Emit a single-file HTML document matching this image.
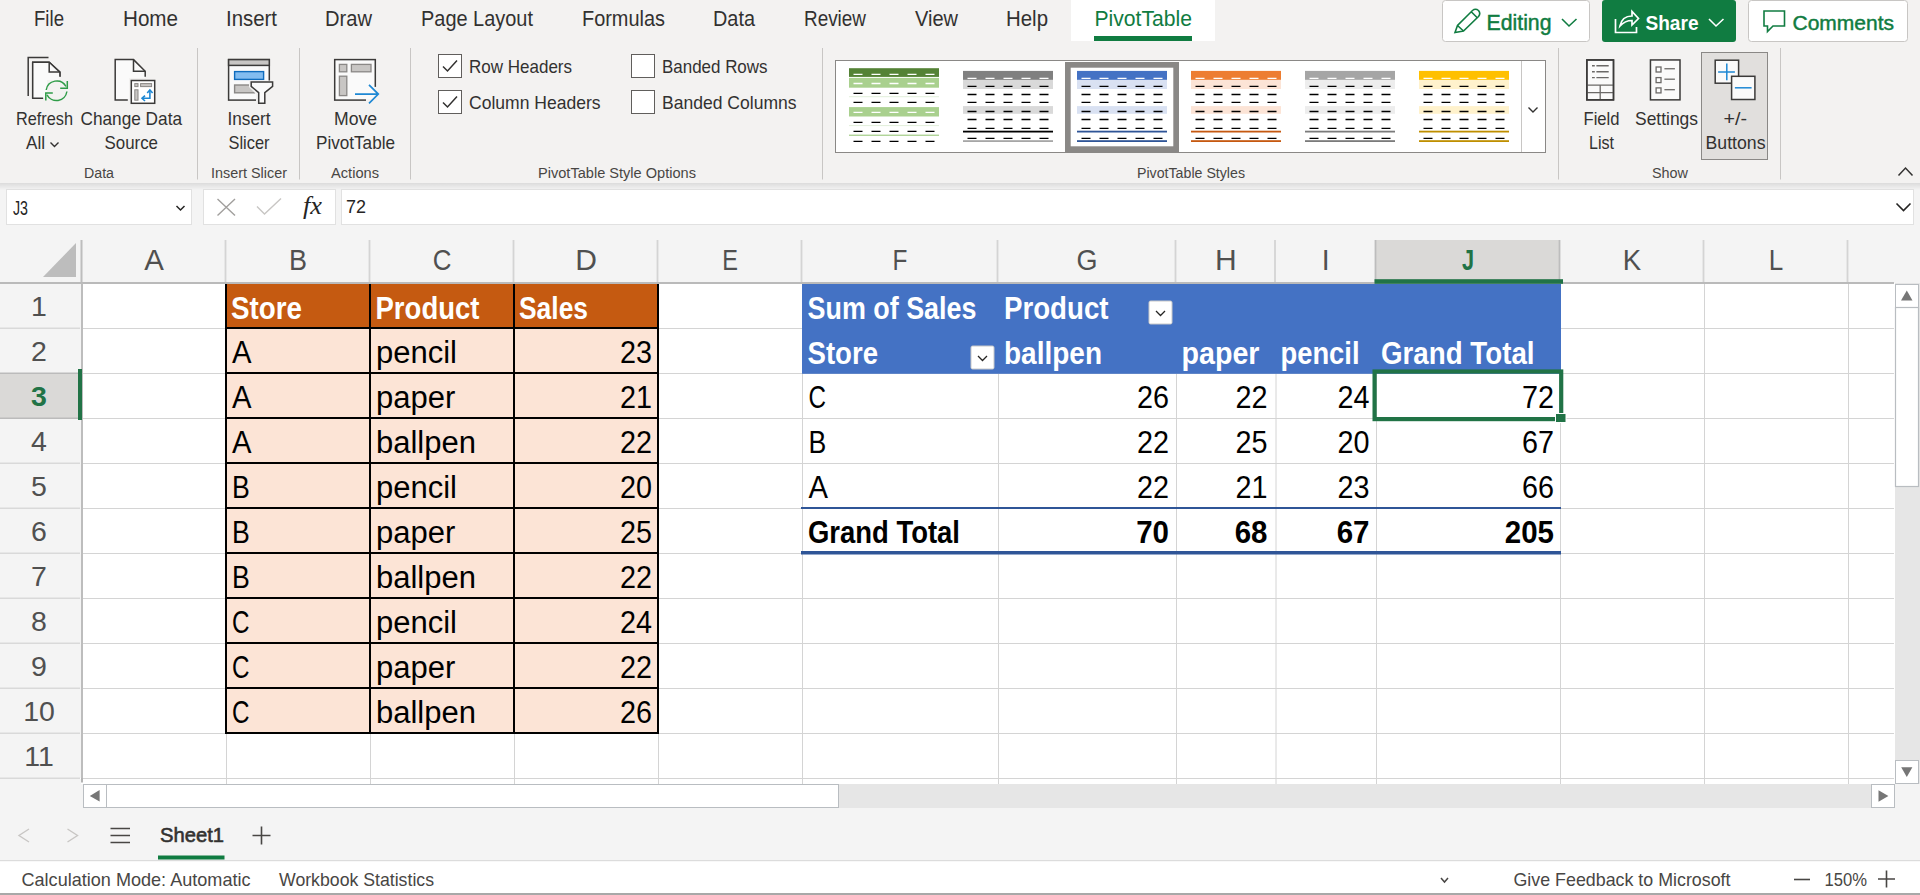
<!DOCTYPE html>
<html lang="en"><head><meta charset="utf-8"><title>Excel - PivotTable</title>
<style>
html,body{margin:0;padding:0;background:#ffffff;overflow:hidden;}
body{width:1920px;height:895px;font-family:"Liberation Sans", sans-serif;}
svg{display:block;font-family:"Liberation Sans", sans-serif;}
</style></head>
<body>
<svg width="1920" height="895" viewBox="0 0 1920 895">
<rect x="0" y="0" width="1920" height="183" fill="#f3f2f1" />
<rect x="0" y="183" width="1920" height="101" fill="#f4f4f4" />
<defs><linearGradient id="shd" x1="0" y1="0" x2="0" y2="1"><stop offset="0" stop-color="#000" stop-opacity="0.10"/><stop offset="1" stop-color="#000" stop-opacity="0"/></linearGradient></defs>
<rect x="0" y="183" width="1920" height="7" fill="url(#shd)" />
<rect x="1071" y="0" width="144" height="41" fill="#ffffff" />
<rect x="1094" y="36" width="98" height="5" fill="#107c41" />
<text x="34" y="26" font-size="22" fill="#323130" textLength="30" lengthAdjust="spacingAndGlyphs" >File</text>
<text x="123" y="26" font-size="22" fill="#323130" textLength="55" lengthAdjust="spacingAndGlyphs" >Home</text>
<text x="226" y="26" font-size="22" fill="#323130" textLength="51" lengthAdjust="spacingAndGlyphs" >Insert</text>
<text x="325" y="26" font-size="22" fill="#323130" textLength="47" lengthAdjust="spacingAndGlyphs" >Draw</text>
<text x="421" y="26" font-size="22" fill="#323130" textLength="112" lengthAdjust="spacingAndGlyphs" >Page Layout</text>
<text x="582" y="26" font-size="22" fill="#323130" textLength="83" lengthAdjust="spacingAndGlyphs" >Formulas</text>
<text x="713" y="26" font-size="22" fill="#323130" textLength="42" lengthAdjust="spacingAndGlyphs" >Data</text>
<text x="804" y="26" font-size="22" fill="#323130" textLength="62" lengthAdjust="spacingAndGlyphs" >Review</text>
<text x="915" y="26" font-size="22" fill="#323130" textLength="43" lengthAdjust="spacingAndGlyphs" >View</text>
<text x="1006" y="26" font-size="22" fill="#323130" textLength="42" lengthAdjust="spacingAndGlyphs" >Help</text>
<text x="1094.5" y="26" font-size="22" fill="#107c41" textLength="97.5" lengthAdjust="spacingAndGlyphs" >PivotTable</text>
<rect x="1442.5" y="0.5" width="147" height="41" fill="#ffffff" rx="3" stroke="#c8c6c4" stroke-width="1"/>
<text x="1486.5" y="29.8" font-size="21.5" fill="#107c41" textLength="65" lengthAdjust="spacingAndGlyphs" stroke="#107c41" stroke-width="0.45">Editing</text>
<path d="M1455 32.5 L1457.5 25.5 L1472.5 10.5 Q1475.5 8 1478.5 10.5 Q1481 13.5 1478.5 16.5 L1463.5 31 Z M1457.5 25.5 L1463.5 31 M1471.5 12 L1477 17.5" stroke="#107c41" fill="none" stroke-width="1.6" />
<path d="M1562 19 L1569 26 L1576.5 19" stroke="#107c41" fill="none" stroke-width="1.6" />
<rect x="1602" y="0" width="134" height="42" fill="#107c41" rx="3"/>
<text x="1645.5" y="30" font-size="21" fill="#ffffff" font-weight="bold" textLength="53" lengthAdjust="spacingAndGlyphs" >Share</text>
<path d="M1615.5 19 V32.5 H1636.5 V27" stroke="#ffffff" fill="none" stroke-width="1.7" />
<path d="M1620 26 Q1622 16 1632 16 V11.5 L1638.5 18.5 L1632 25 V20.5 Q1625 20.5 1620 26 Z" stroke="#ffffff" fill="none" stroke-width="1.7" />
<path d="M1709 19 L1716 26 L1723.5 19" stroke="#ffffff" fill="none" stroke-width="1.6" />
<rect x="1748.5" y="0.5" width="159" height="41" fill="#ffffff" rx="3" stroke="#c8c6c4" stroke-width="1"/>
<path d="M1764 11 H1784.5 V26 H1773 L1767.5 31.5 V26 H1764 Z" stroke="#107c41" fill="none" stroke-width="1.6" />
<text x="1792.5" y="29.8" font-size="21" fill="#107c41" textLength="101.5" lengthAdjust="spacingAndGlyphs" stroke="#107c41" stroke-width="0.45">Comments</text>
<line x1="197.5" y1="48" x2="197.5" y2="179.5" stroke="#c8c6c4" stroke-width="1" />
<line x1="299.5" y1="48" x2="299.5" y2="179.5" stroke="#c8c6c4" stroke-width="1" />
<line x1="410.5" y1="48" x2="410.5" y2="179.5" stroke="#c8c6c4" stroke-width="1" />
<line x1="822.5" y1="48" x2="822.5" y2="179.5" stroke="#c8c6c4" stroke-width="1" />
<line x1="1558.5" y1="48" x2="1558.5" y2="179.5" stroke="#c8c6c4" stroke-width="1" />
<line x1="1780.5" y1="48" x2="1780.5" y2="179.5" stroke="#c8c6c4" stroke-width="1" />
<text x="84" y="178" font-size="15.5" fill="#484644" textLength="30" lengthAdjust="spacingAndGlyphs" >Data</text>
<text x="211" y="178" font-size="15.5" fill="#484644" textLength="76" lengthAdjust="spacingAndGlyphs" >Insert Slicer</text>
<text x="331" y="178" font-size="15.5" fill="#484644" textLength="48" lengthAdjust="spacingAndGlyphs" >Actions</text>
<text x="538" y="178" font-size="15.5" fill="#484644" textLength="158" lengthAdjust="spacingAndGlyphs" >PivotTable Style Options</text>
<text x="1137" y="178" font-size="15.5" fill="#484644" textLength="108" lengthAdjust="spacingAndGlyphs" >PivotTable Styles</text>
<text x="1652" y="178" font-size="15.5" fill="#484644" textLength="36" lengthAdjust="spacingAndGlyphs" >Show</text>
<text x="16" y="124.8" font-size="18.5" fill="#323130" textLength="57" lengthAdjust="spacingAndGlyphs" >Refresh</text>
<text x="26" y="148.7" font-size="18.5" fill="#323130" textLength="19" lengthAdjust="spacingAndGlyphs" >All</text>
<path d="M50.5 142.5 L54.5 146.5 L58.5 142.5" stroke="#323130" fill="none" stroke-width="1.4" />
<text x="80.5" y="124.8" font-size="18.5" fill="#323130" textLength="101.5" lengthAdjust="spacingAndGlyphs" >Change Data</text>
<text x="104.5" y="148.7" font-size="18.5" fill="#323130" textLength="53.5" lengthAdjust="spacingAndGlyphs" >Source</text>
<text x="227.5" y="124.8" font-size="18.5" fill="#323130" textLength="43" lengthAdjust="spacingAndGlyphs" >Insert</text>
<text x="228.5" y="148.7" font-size="18.5" fill="#323130" textLength="41" lengthAdjust="spacingAndGlyphs" >Slicer</text>
<text x="334" y="124.8" font-size="18.5" fill="#323130" textLength="43" lengthAdjust="spacingAndGlyphs" >Move</text>
<text x="316" y="148.7" font-size="18.5" fill="#323130" textLength="79" lengthAdjust="spacingAndGlyphs" >PivotTable</text>
<text x="1583.5" y="124.5" font-size="18.5" fill="#323130" textLength="36" lengthAdjust="spacingAndGlyphs" >Field</text>
<text x="1589" y="148.5" font-size="18.5" fill="#323130" textLength="25" lengthAdjust="spacingAndGlyphs" >List</text>
<text x="1635" y="124.5" font-size="18.5" fill="#323130" textLength="63" lengthAdjust="spacingAndGlyphs" >Settings</text>
<rect x="1701.5" y="52.5" width="66" height="107" fill="#e1dfdd" stroke="#8a8886" stroke-width="1"/>
<text x="1723.5" y="124.5" font-size="18.5" fill="#323130" textLength="23.5" lengthAdjust="spacingAndGlyphs" >+/-</text>
<text x="1705.5" y="148.5" font-size="18.5" fill="#323130" textLength="60" lengthAdjust="spacingAndGlyphs" >Buttons</text>
<rect x="438.5" y="54.5" width="23" height="23" fill="#ffffff" stroke="#605e5c" stroke-width="1"/>
<path d="M443 66.5 L447.5 71 L457 60.5" stroke="#323130" fill="none" stroke-width="1.5" />
<text x="469" y="73" font-size="18.5" fill="#323130" textLength="103" lengthAdjust="spacingAndGlyphs" >Row Headers</text>
<rect x="438.5" y="90.5" width="23" height="23" fill="#ffffff" stroke="#605e5c" stroke-width="1"/>
<path d="M443 102.5 L447.5 107 L457 96.5" stroke="#323130" fill="none" stroke-width="1.5" />
<text x="469" y="109" font-size="18.5" fill="#323130" textLength="131.5" lengthAdjust="spacingAndGlyphs" >Column Headers</text>
<rect x="631.5" y="54.5" width="23" height="23" fill="#ffffff" stroke="#605e5c" stroke-width="1"/>
<text x="662" y="73" font-size="18.5" fill="#323130" textLength="105.5" lengthAdjust="spacingAndGlyphs" >Banded Rows</text>
<rect x="631.5" y="90.5" width="23" height="23" fill="#ffffff" stroke="#605e5c" stroke-width="1"/>
<text x="662" y="109" font-size="18.5" fill="#323130" textLength="134.5" lengthAdjust="spacingAndGlyphs" >Banded Columns</text>
<path d="M1898.5 175.5 L1905.5 168 L1912.5 175.5" stroke="#323130" fill="none" stroke-width="1.5" />
<path d="M28.2 96 V57.4 H48.5" stroke="#3b3a39" fill="none" stroke-width="1.5" />
<path d="M43.1 98.3 H32.7 V62.3 H49.2 L59.9 72.1 V76.8" stroke="#3b3a39" fill="#fafafa" stroke-width="1.5" />
<path d="M32.7 98.3 V62.3 H49.2 L59.9 72.1 V80 L45 96 V98.3 Z" stroke="none" fill="#fafafa" stroke-width="1" />
<path d="M32.7 98.3 H43.1 M32.7 98.3 V62.3 H49.2 L59.9 72.1 V76.8" stroke="#3b3a39" fill="none" stroke-width="1.5" />
<path d="M49.2 62.3 V72.1 H59.9" stroke="#3b3a39" fill="none" stroke-width="1.5" />
<rect x="47" y="80" width="22" height="22" fill="#f3f2f1" />
<path d="M46.2 90 A10.6 10.6 0 0 1 66 86.5" stroke="#2f9c48" fill="none" stroke-width="1.5" />
<path d="M67.3 81 V88.2 H60.2" stroke="#2f9c48" fill="none" stroke-width="1.5" />
<path d="M66.9 91.5 A10.6 10.6 0 0 1 47 94.8" stroke="#2f9c48" fill="none" stroke-width="1.5" />
<path d="M45.8 100.6 V92.9 H52.8" stroke="#2f9c48" fill="none" stroke-width="1.5" />
<path d="M115.2 100.1 V59.6 H133.5 L145.2 71.3 V80 L127.8 100.1 Z" stroke="none" fill="#fafafa" stroke-width="1" />
<path d="M127.8 100.1 H115.2 V59.6 H133.5 L145.2 71.3 V76.7" stroke="#3b3a39" fill="none" stroke-width="1.5" />
<path d="M133.5 59.6 V71.3 H145.2" stroke="#3b3a39" fill="none" stroke-width="1.5" />
<rect x="129" y="78" width="28" height="28" fill="#f3f2f1" />
<rect x="131.3" y="80.5" width="23.4" height="22.8" fill="#ffffff" stroke="#3b3a39" stroke-width="1.5"/>
<rect x="134.8" y="83.6" width="3.2" height="3" fill="#c8c6c4" stroke="#8a8886" stroke-width="1"/>
<rect x="140.6" y="83.6" width="11" height="3" fill="#c8c6c4" stroke="#8a8886" stroke-width="1"/>
<rect x="134.8" y="89.8" width="3.2" height="10.4" fill="#c8c6c4" stroke="#8a8886" stroke-width="1"/>
<path d="M142.5 98.3 H149.9 V90.5" stroke="#1e88d4" fill="none" stroke-width="1.6" />
<path d="M145 95.6 L142 98.3 L145 101 M147.2 93 L149.9 90 L152.6 93" stroke="#1e88d4" fill="none" stroke-width="1.6" />
<rect x="228.6" y="59.6" width="40.7" height="40.5" fill="#fafafa" stroke="#3b3a39" stroke-width="1.5"/>
<rect x="228.6" y="59.6" width="40.7" height="5.8" fill="#c8c6c4" stroke="#3b3a39" stroke-width="1.5"/>
<rect x="234.6" y="71.6" width="29" height="7.8" fill="#83bdf0" stroke="#0f6cbd" stroke-width="1.4"/>
<rect x="234.6" y="85" width="20" height="7.8" fill="#c8c6c4" stroke="#8a8886" stroke-width="1.4"/>
<path d="M249 80.5 H276 V106 H256 V94 L249 87 Z" stroke="none" fill="#f3f2f1" stroke-width="1" />
<path d="M251.2 82 H272.6 V86.4 L264.8 92.6 V103.3 H258.7 V92.6 L251.2 86.4 Z" stroke="#3b3a39" fill="#fafafa" stroke-width="1.5" />
<rect x="334.7" y="59.6" width="40.6" height="40.5" fill="#fafafa" stroke="#3b3a39" stroke-width="1.5"/>
<rect x="339.4" y="64.4" width="7.4" height="7.4" fill="#c8c6c4" stroke="#8a8886" stroke-width="1.3"/>
<rect x="351.4" y="64.4" width="19.6" height="7.4" fill="#c8c6c4" stroke="#8a8886" stroke-width="1.3"/>
<rect x="339.4" y="76.2" width="7.4" height="19.4" fill="#c8c6c4" stroke="#8a8886" stroke-width="1.3"/>
<rect x="366" y="86.9" width="14" height="16" fill="#f3f2f1" />
<rect x="366" y="86.9" width="8.5" height="12.4" fill="#fafafa" />
<path d="M355 94.1 H377.5 M369 84.8 L378.3 94.1 L369 103.4" stroke="#1e88d4" fill="none" stroke-width="1.7" />
<rect x="1586.85" y="59.95" width="26.65" height="39.9" fill="#fafafa" stroke="#3b3a39" stroke-width="1.5"/>
<path d="M1592 65.75 H1594.8 M1596.4 65.75 H1608.7" stroke="#6b6967" fill="none" stroke-width="1.3" />
<path d="M1592 71.75 H1594.8 M1596.4 71.75 H1608.7" stroke="#6b6967" fill="none" stroke-width="1.3" />
<path d="M1592 77.6 H1594.8 M1596.4 77.6 H1608.7" stroke="#6b6967" fill="none" stroke-width="1.3" />
<path d="M1587 85.1 H1613.5 M1587 92.6 H1613.5 M1600.2 85.1 V100" stroke="#6b6967" fill="none" stroke-width="1.3" />
<rect x="1586.85" y="59.95" width="26.65" height="39.9" fill="none" stroke="#3b3a39" stroke-width="1.5"/>
<rect x="1650.45" y="59.95" width="29.55" height="39.9" fill="#fafafa" stroke="#3b3a39" stroke-width="1.5"/>
<rect x="1656.1" y="67.0" width="4.9" height="5" fill="#ffffff" stroke="#6b6967" stroke-width="1.3"/>
<path d="M1664.4 68.75 H1674.9" stroke="#6b6967" fill="none" stroke-width="1.3" />
<rect x="1656.1" y="77.6" width="4.9" height="5" fill="#ffffff" stroke="#6b6967" stroke-width="1.3"/>
<path d="M1664.4 79.2 H1674.9" stroke="#6b6967" fill="none" stroke-width="1.3" />
<rect x="1656.1" y="87.89999999999999" width="4.9" height="5" fill="#ffffff" stroke="#6b6967" stroke-width="1.3"/>
<path d="M1664.4 89.7 H1674.9" stroke="#6b6967" fill="none" stroke-width="1.3" />
<rect x="1715.2" y="60.2" width="23.4" height="23" fill="#fafafa" stroke="#3b3a39" stroke-width="1.5"/>
<path d="M1718.1 71.9 H1734.9 M1726.8 63.4 V80.2" stroke="#1e88d4" fill="none" stroke-width="1.5" />
<rect x="1731.6" y="76.3" width="23.3" height="23.2" fill="#fafafa" stroke="#3b3a39" stroke-width="1.5"/>
<path d="M1734.9 87.8 H1751.6" stroke="#1e88d4" fill="none" stroke-width="1.5" />
<rect x="835.5" y="60.5" width="710" height="92" fill="#ffffff" stroke="#8a8886" stroke-width="1"/>
<line x1="1521.5" y1="61" x2="1521.5" y2="152" stroke="#c8c6c4" stroke-width="1" />
<path d="M1528.5 107.5 L1533 112 L1537.5 107.5" stroke="#323130" fill="none" stroke-width="1.4" />
<rect x="1067.85" y="64.85" width="108.3" height="84.3" fill="none" stroke="#8a8886" stroke-width="5.7"/>
<rect x="849" y="68.2" width="90" height="8.7" fill="#548235" />
<rect x="849" y="77.9" width="90" height="9.8" fill="#a9d08e" />
<rect x="849" y="96.2" width="90" height="1" fill="#e2efda" />
<rect x="849" y="107.1" width="90" height="9.4" fill="#a9d08e" />
<rect x="849" y="125.1" width="90" height="1" fill="#e2efda" />
<rect x="849" y="134.6" width="90" height="1.3" fill="#a9d08e" />
<path d="M853.5 74.4 H862.5 M871.5 74.4 H880.5 M889.5 74.4 H898.5 M907.5 74.4 H916.5 M925.5 74.4 H934.5 " stroke="#fff" fill="none" stroke-width="1.3" />
<path d="M853.5 83.5 H862.5 M871.5 83.5 H880.5 M889.5 83.5 H898.5 M907.5 83.5 H916.5 M925.5 83.5 H934.5 " stroke="#fff" fill="none" stroke-width="1.3" />
<path d="M853.5 93.4 H862.5 M871.5 93.4 H880.5 M889.5 93.4 H898.5 M907.5 93.4 H916.5 M925.5 93.4 H934.5 " stroke="#000" fill="none" stroke-width="1.3" />
<path d="M853.5 102.4 H862.5 M871.5 102.4 H880.5 M889.5 102.4 H898.5 M907.5 102.4 H916.5 M925.5 102.4 H934.5 " stroke="#000" fill="none" stroke-width="1.3" />
<path d="M853.5 112.3 H862.5 M871.5 112.3 H880.5 M889.5 112.3 H898.5 M907.5 112.3 H916.5 M925.5 112.3 H934.5 " stroke="#fff" fill="none" stroke-width="1.3" />
<path d="M853.5 122.3 H862.5 M871.5 122.3 H880.5 M889.5 122.3 H898.5 M907.5 122.3 H916.5 M925.5 122.3 H934.5 " stroke="#000" fill="none" stroke-width="1.3" />
<path d="M853.5 131.4 H862.5 M871.5 131.4 H880.5 M889.5 131.4 H898.5 M907.5 131.4 H916.5 M925.5 131.4 H934.5 " stroke="#000" fill="none" stroke-width="1.3" />
<path d="M853.5 141.4 H862.5 M871.5 141.4 H880.5 M889.5 141.4 H898.5 M907.5 141.4 H916.5 M925.5 141.4 H934.5 " stroke="#000" fill="none" stroke-width="1.3" />
<rect x="963" y="70.9" width="90" height="9" fill="#808080" />
<rect x="963" y="79.9" width="90" height="9.1" fill="#d9d9d9" />
<rect x="963" y="106.1" width="90" height="7.7" fill="#d9d9d9" />
<rect x="963" y="130.7" width="90" height="1.8" fill="#000000" />
<rect x="963" y="140.2" width="90" height="1.8" fill="#a6a6a6" />
<path d="M967.5 78.4 H976.5 M985.5 78.4 H994.5 M1003.5 78.4 H1012.5 M1021.5 78.4 H1030.5 M1039.5 78.4 H1048.5 " stroke="#fff" fill="none" stroke-width="1.3" />
<path d="M967.5 86.4 H976.5 M985.5 86.4 H994.5 M1003.5 86.4 H1012.5 M1021.5 86.4 H1030.5 M1039.5 86.4 H1048.5 " stroke="#000" fill="none" stroke-width="1.3" />
<path d="M967.5 94.5 H976.5 M985.5 94.5 H994.5 M1003.5 94.5 H1012.5 M1021.5 94.5 H1030.5 M1039.5 94.5 H1048.5 " stroke="#000" fill="none" stroke-width="1.3" />
<path d="M967.5 102.4 H976.5 M985.5 102.4 H994.5 M1003.5 102.4 H1012.5 M1021.5 102.4 H1030.5 M1039.5 102.4 H1048.5 " stroke="#000" fill="none" stroke-width="1.3" />
<path d="M967.5 111.5 H976.5 M985.5 111.5 H994.5 M1003.5 111.5 H1012.5 M1021.5 111.5 H1030.5 M1039.5 111.5 H1048.5 " stroke="#000" fill="none" stroke-width="1.3" />
<path d="M967.5 119.5 H976.5 M985.5 119.5 H994.5 M1003.5 119.5 H1012.5 M1021.5 119.5 H1030.5 M1039.5 119.5 H1048.5 " stroke="#000" fill="none" stroke-width="1.3" />
<path d="M967.5 128.4 H976.5 M985.5 128.4 H994.5 M1003.5 128.4 H1012.5 M1021.5 128.4 H1030.5 M1039.5 128.4 H1048.5 " stroke="#000" fill="none" stroke-width="1.3" />
<path d="M967.5 138.4 H976.5 M985.5 138.4 H994.5 M1003.5 138.4 H1012.5 M1021.5 138.4 H1030.5 M1039.5 138.4 H1048.5 " stroke="#000" fill="none" stroke-width="1.3" />
<rect x="1077" y="70.9" width="90" height="9" fill="#4472c4" />
<rect x="1077" y="79.9" width="90" height="9.1" fill="#d9e1f2" />
<rect x="1077" y="106.1" width="90" height="7.7" fill="#d9e1f2" />
<rect x="1077" y="130.7" width="90" height="1.8" fill="#2f5597" />
<rect x="1077" y="140.2" width="90" height="1.8" fill="#2f5597" />
<path d="M1081.5 78.4 H1090.5 M1099.5 78.4 H1108.5 M1117.5 78.4 H1126.5 M1135.5 78.4 H1144.5 M1153.5 78.4 H1162.5 " stroke="#fff" fill="none" stroke-width="1.3" />
<path d="M1081.5 86.4 H1090.5 M1099.5 86.4 H1108.5 M1117.5 86.4 H1126.5 M1135.5 86.4 H1144.5 M1153.5 86.4 H1162.5 " stroke="#000" fill="none" stroke-width="1.3" />
<path d="M1081.5 94.5 H1090.5 M1099.5 94.5 H1108.5 M1117.5 94.5 H1126.5 M1135.5 94.5 H1144.5 M1153.5 94.5 H1162.5 " stroke="#000" fill="none" stroke-width="1.3" />
<path d="M1081.5 102.4 H1090.5 M1099.5 102.4 H1108.5 M1117.5 102.4 H1126.5 M1135.5 102.4 H1144.5 M1153.5 102.4 H1162.5 " stroke="#000" fill="none" stroke-width="1.3" />
<path d="M1081.5 111.5 H1090.5 M1099.5 111.5 H1108.5 M1117.5 111.5 H1126.5 M1135.5 111.5 H1144.5 M1153.5 111.5 H1162.5 " stroke="#000" fill="none" stroke-width="1.3" />
<path d="M1081.5 119.5 H1090.5 M1099.5 119.5 H1108.5 M1117.5 119.5 H1126.5 M1135.5 119.5 H1144.5 M1153.5 119.5 H1162.5 " stroke="#000" fill="none" stroke-width="1.3" />
<path d="M1081.5 128.4 H1090.5 M1099.5 128.4 H1108.5 M1117.5 128.4 H1126.5 M1135.5 128.4 H1144.5 M1153.5 128.4 H1162.5 " stroke="#000" fill="none" stroke-width="1.3" />
<path d="M1081.5 138.4 H1090.5 M1099.5 138.4 H1108.5 M1117.5 138.4 H1126.5 M1135.5 138.4 H1144.5 M1153.5 138.4 H1162.5 " stroke="#000" fill="none" stroke-width="1.3" />
<rect x="1191" y="70.9" width="90" height="9" fill="#ed7d31" />
<rect x="1191" y="79.9" width="90" height="9.1" fill="#fce4d6" />
<rect x="1191" y="106.1" width="90" height="7.7" fill="#fce4d6" />
<rect x="1191" y="130.7" width="90" height="1.8" fill="#c65911" />
<rect x="1191" y="140.2" width="90" height="1.8" fill="#c65911" />
<path d="M1195.5 78.4 H1204.5 M1213.5 78.4 H1222.5 M1231.5 78.4 H1240.5 M1249.5 78.4 H1258.5 M1267.5 78.4 H1276.5 " stroke="#fff" fill="none" stroke-width="1.3" />
<path d="M1195.5 86.4 H1204.5 M1213.5 86.4 H1222.5 M1231.5 86.4 H1240.5 M1249.5 86.4 H1258.5 M1267.5 86.4 H1276.5 " stroke="#000" fill="none" stroke-width="1.3" />
<path d="M1195.5 94.5 H1204.5 M1213.5 94.5 H1222.5 M1231.5 94.5 H1240.5 M1249.5 94.5 H1258.5 M1267.5 94.5 H1276.5 " stroke="#000" fill="none" stroke-width="1.3" />
<path d="M1195.5 102.4 H1204.5 M1213.5 102.4 H1222.5 M1231.5 102.4 H1240.5 M1249.5 102.4 H1258.5 M1267.5 102.4 H1276.5 " stroke="#000" fill="none" stroke-width="1.3" />
<path d="M1195.5 111.5 H1204.5 M1213.5 111.5 H1222.5 M1231.5 111.5 H1240.5 M1249.5 111.5 H1258.5 M1267.5 111.5 H1276.5 " stroke="#000" fill="none" stroke-width="1.3" />
<path d="M1195.5 119.5 H1204.5 M1213.5 119.5 H1222.5 M1231.5 119.5 H1240.5 M1249.5 119.5 H1258.5 M1267.5 119.5 H1276.5 " stroke="#000" fill="none" stroke-width="1.3" />
<path d="M1195.5 128.4 H1204.5 M1213.5 128.4 H1222.5 M1231.5 128.4 H1240.5 M1249.5 128.4 H1258.5 M1267.5 128.4 H1276.5 " stroke="#000" fill="none" stroke-width="1.3" />
<path d="M1195.5 138.4 H1204.5 M1213.5 138.4 H1222.5 M1231.5 138.4 H1240.5 M1249.5 138.4 H1258.5 M1267.5 138.4 H1276.5 " stroke="#000" fill="none" stroke-width="1.3" />
<rect x="1305" y="70.9" width="90" height="9" fill="#a5a5a5" />
<rect x="1305" y="79.9" width="90" height="9.1" fill="#ededed" />
<rect x="1305" y="106.1" width="90" height="7.7" fill="#ededed" />
<rect x="1305" y="130.7" width="90" height="1.8" fill="#7b7b7b" />
<rect x="1305" y="140.2" width="90" height="1.8" fill="#7b7b7b" />
<path d="M1309.5 78.4 H1318.5 M1327.5 78.4 H1336.5 M1345.5 78.4 H1354.5 M1363.5 78.4 H1372.5 M1381.5 78.4 H1390.5 " stroke="#fff" fill="none" stroke-width="1.3" />
<path d="M1309.5 86.4 H1318.5 M1327.5 86.4 H1336.5 M1345.5 86.4 H1354.5 M1363.5 86.4 H1372.5 M1381.5 86.4 H1390.5 " stroke="#000" fill="none" stroke-width="1.3" />
<path d="M1309.5 94.5 H1318.5 M1327.5 94.5 H1336.5 M1345.5 94.5 H1354.5 M1363.5 94.5 H1372.5 M1381.5 94.5 H1390.5 " stroke="#000" fill="none" stroke-width="1.3" />
<path d="M1309.5 102.4 H1318.5 M1327.5 102.4 H1336.5 M1345.5 102.4 H1354.5 M1363.5 102.4 H1372.5 M1381.5 102.4 H1390.5 " stroke="#000" fill="none" stroke-width="1.3" />
<path d="M1309.5 111.5 H1318.5 M1327.5 111.5 H1336.5 M1345.5 111.5 H1354.5 M1363.5 111.5 H1372.5 M1381.5 111.5 H1390.5 " stroke="#000" fill="none" stroke-width="1.3" />
<path d="M1309.5 119.5 H1318.5 M1327.5 119.5 H1336.5 M1345.5 119.5 H1354.5 M1363.5 119.5 H1372.5 M1381.5 119.5 H1390.5 " stroke="#000" fill="none" stroke-width="1.3" />
<path d="M1309.5 128.4 H1318.5 M1327.5 128.4 H1336.5 M1345.5 128.4 H1354.5 M1363.5 128.4 H1372.5 M1381.5 128.4 H1390.5 " stroke="#000" fill="none" stroke-width="1.3" />
<path d="M1309.5 138.4 H1318.5 M1327.5 138.4 H1336.5 M1345.5 138.4 H1354.5 M1363.5 138.4 H1372.5 M1381.5 138.4 H1390.5 " stroke="#000" fill="none" stroke-width="1.3" />
<rect x="1419" y="70.9" width="90" height="9" fill="#ffc000" />
<rect x="1419" y="79.9" width="90" height="9.1" fill="#fff2cc" />
<rect x="1419" y="106.1" width="90" height="7.7" fill="#fff2cc" />
<rect x="1419" y="130.7" width="90" height="1.8" fill="#bf8f00" />
<rect x="1419" y="140.2" width="90" height="1.8" fill="#bf8f00" />
<path d="M1423.5 78.4 H1432.5 M1441.5 78.4 H1450.5 M1459.5 78.4 H1468.5 M1477.5 78.4 H1486.5 M1495.5 78.4 H1504.5 " stroke="#fff" fill="none" stroke-width="1.3" />
<path d="M1423.5 86.4 H1432.5 M1441.5 86.4 H1450.5 M1459.5 86.4 H1468.5 M1477.5 86.4 H1486.5 M1495.5 86.4 H1504.5 " stroke="#000" fill="none" stroke-width="1.3" />
<path d="M1423.5 94.5 H1432.5 M1441.5 94.5 H1450.5 M1459.5 94.5 H1468.5 M1477.5 94.5 H1486.5 M1495.5 94.5 H1504.5 " stroke="#000" fill="none" stroke-width="1.3" />
<path d="M1423.5 102.4 H1432.5 M1441.5 102.4 H1450.5 M1459.5 102.4 H1468.5 M1477.5 102.4 H1486.5 M1495.5 102.4 H1504.5 " stroke="#000" fill="none" stroke-width="1.3" />
<path d="M1423.5 111.5 H1432.5 M1441.5 111.5 H1450.5 M1459.5 111.5 H1468.5 M1477.5 111.5 H1486.5 M1495.5 111.5 H1504.5 " stroke="#000" fill="none" stroke-width="1.3" />
<path d="M1423.5 119.5 H1432.5 M1441.5 119.5 H1450.5 M1459.5 119.5 H1468.5 M1477.5 119.5 H1486.5 M1495.5 119.5 H1504.5 " stroke="#000" fill="none" stroke-width="1.3" />
<path d="M1423.5 128.4 H1432.5 M1441.5 128.4 H1450.5 M1459.5 128.4 H1468.5 M1477.5 128.4 H1486.5 M1495.5 128.4 H1504.5 " stroke="#000" fill="none" stroke-width="1.3" />
<path d="M1423.5 138.4 H1432.5 M1441.5 138.4 H1450.5 M1459.5 138.4 H1468.5 M1477.5 138.4 H1486.5 M1495.5 138.4 H1504.5 " stroke="#000" fill="none" stroke-width="1.3" />
<rect x="6.5" y="189.5" width="185" height="35" fill="#ffffff" stroke="#e1e1e1" stroke-width="1"/>
<text x="13" y="214.5" font-size="20" fill="#252423" textLength="15" lengthAdjust="spacingAndGlyphs" >J3</text>
<path d="M176.5 206 L180.5 210 L184.5 206" stroke="#252423" fill="none" stroke-width="1.5" />
<rect x="203.5" y="189.5" width="132" height="35" fill="#ffffff" stroke="#e1e1e1" stroke-width="1"/>
<path d="M217.5 199 L235 215.5 M235 199 L217.5 215.5" stroke="#a19f9d" fill="none" stroke-width="1.4" />
<path d="M257 206.5 L264.5 214 L281 198.5" stroke="#c8c6c4" fill="none" stroke-width="1.4" />
<text x="303" y="214" font-size="25" fill="#252423" textLength="19" lengthAdjust="spacingAndGlyphs" font-style="italic" font-family="Liberation Serif">fx</text>
<rect x="341.5" y="189.5" width="1572" height="35" fill="#ffffff" stroke="#e1e1e1" stroke-width="1"/>
<text x="346" y="213" font-size="19" fill="#252423" textLength="20" lengthAdjust="spacingAndGlyphs" >72</text>
<path d="M1896.5 203.5 L1903.5 210.5 L1910.5 203.5" stroke="#252423" fill="none" stroke-width="1.6" />
<rect x="83" y="283" width="1812" height="501" fill="#ffffff" />
<rect x="1376" y="240" width="183" height="42" fill="#dad9d7" />
<line x1="225.5" y1="240" x2="225.5" y2="282" stroke="#d4d4d4" stroke-width="1.8" />
<line x1="369.5" y1="240" x2="369.5" y2="282" stroke="#d4d4d4" stroke-width="1.8" />
<line x1="513.5" y1="240" x2="513.5" y2="282" stroke="#d4d4d4" stroke-width="1.8" />
<line x1="657.5" y1="240" x2="657.5" y2="282" stroke="#d4d4d4" stroke-width="1.8" />
<line x1="801.5" y1="240" x2="801.5" y2="282" stroke="#d4d4d4" stroke-width="1.8" />
<line x1="997.5" y1="240" x2="997.5" y2="282" stroke="#d4d4d4" stroke-width="1.8" />
<line x1="1175.5" y1="240" x2="1175.5" y2="282" stroke="#d4d4d4" stroke-width="1.8" />
<line x1="1275.0" y1="240" x2="1275.0" y2="282" stroke="#d4d4d4" stroke-width="1.8" />
<line x1="1375.5" y1="240" x2="1375.5" y2="282" stroke="#bdbdbd" stroke-width="1.8" />
<line x1="1559.5" y1="240" x2="1559.5" y2="282" stroke="#bdbdbd" stroke-width="1.8" />
<line x1="1703.5" y1="240" x2="1703.5" y2="282" stroke="#d4d4d4" stroke-width="1.8" />
<line x1="1847.5" y1="240" x2="1847.5" y2="282" stroke="#d4d4d4" stroke-width="1.8" />
<line x1="81.5" y1="240" x2="81.5" y2="283" stroke="#bdbdbd" stroke-width="2" />
<text x="154.0" y="270" font-size="29" fill="#505050" text-anchor="middle" textLength="19.6" lengthAdjust="spacingAndGlyphs" >A</text>
<text x="298.0" y="270" font-size="29" fill="#505050" text-anchor="middle" textLength="18.0" lengthAdjust="spacingAndGlyphs" >B</text>
<text x="442.0" y="270" font-size="29" fill="#505050" text-anchor="middle" textLength="18.7" lengthAdjust="spacingAndGlyphs" >C</text>
<text x="586.0" y="270" font-size="29" fill="#505050" text-anchor="middle" textLength="21.7" lengthAdjust="spacingAndGlyphs" >D</text>
<text x="730.0" y="270" font-size="29" fill="#505050" text-anchor="middle" textLength="15.7" lengthAdjust="spacingAndGlyphs" >E</text>
<text x="900.0" y="270" font-size="29" fill="#505050" text-anchor="middle" textLength="14.9" lengthAdjust="spacingAndGlyphs" >F</text>
<text x="1087.0" y="270" font-size="29" fill="#505050" text-anchor="middle" textLength="21.0" lengthAdjust="spacingAndGlyphs" >G</text>
<text x="1225.75" y="270" font-size="29" fill="#505050" text-anchor="middle" textLength="21.7" lengthAdjust="spacingAndGlyphs" >H</text>
<text x="1325.75" y="270" font-size="29" fill="#505050" text-anchor="middle" textLength="7.9" lengthAdjust="spacingAndGlyphs" >I</text>
<text x="1468.0" y="270" font-size="29" fill="#217346" font-weight="bold" text-anchor="middle" textLength="12.1" lengthAdjust="spacingAndGlyphs" >J</text>
<text x="1632.0" y="270" font-size="29" fill="#505050" text-anchor="middle" textLength="18.4" lengthAdjust="spacingAndGlyphs" >K</text>
<text x="1776.0" y="270" font-size="29" fill="#505050" text-anchor="middle" textLength="14.5" lengthAdjust="spacingAndGlyphs" >L</text>
<path d="M76 243 L76 277 L43 277 Z" stroke="none" fill="#bdbdbd" stroke-width="1" />
<rect x="0" y="282" width="1894" height="2" fill="#bababa" />
<rect x="1374.5" y="279.2" width="188.5" height="4.6" fill="#217346" />
<rect x="0" y="284" width="81" height="494" fill="#f4f4f4" />
<rect x="0" y="373" width="81" height="45" fill="#dad9d7" />
<line x1="0" y1="328.3" x2="80" y2="328.3" stroke="#d9d9d9" stroke-width="1.5" />
<line x1="0" y1="373.3" x2="80" y2="373.3" stroke="#bbbbbb" stroke-width="1.5" />
<line x1="0" y1="418.3" x2="80" y2="418.3" stroke="#bbbbbb" stroke-width="1.5" />
<line x1="0" y1="463.3" x2="80" y2="463.3" stroke="#d9d9d9" stroke-width="1.5" />
<line x1="0" y1="508.3" x2="80" y2="508.3" stroke="#d9d9d9" stroke-width="1.5" />
<line x1="0" y1="553.3" x2="80" y2="553.3" stroke="#d9d9d9" stroke-width="1.5" />
<line x1="0" y1="598.3" x2="80" y2="598.3" stroke="#d9d9d9" stroke-width="1.5" />
<line x1="0" y1="643.3" x2="80" y2="643.3" stroke="#d9d9d9" stroke-width="1.5" />
<line x1="0" y1="688.3" x2="80" y2="688.3" stroke="#d9d9d9" stroke-width="1.5" />
<line x1="0" y1="733.3" x2="80" y2="733.3" stroke="#d9d9d9" stroke-width="1.5" />
<line x1="0" y1="778.3" x2="80" y2="778.3" stroke="#d9d9d9" stroke-width="1.5" />
<rect x="81" y="283" width="2" height="495" fill="#bdbdbd" />
<rect x="78" y="369" width="4" height="51" fill="#217346" />
<text x="39" y="315.7" font-size="28.5" fill="#505050" text-anchor="middle" >1</text>
<text x="39" y="360.7" font-size="28.5" fill="#505050" text-anchor="middle" >2</text>
<text x="39" y="405.7" font-size="28.5" fill="#217346" font-weight="bold" text-anchor="middle" >3</text>
<text x="39" y="450.7" font-size="28.5" fill="#505050" text-anchor="middle" >4</text>
<text x="39" y="495.7" font-size="28.5" fill="#505050" text-anchor="middle" >5</text>
<text x="39" y="540.7" font-size="28.5" fill="#505050" text-anchor="middle" >6</text>
<text x="39" y="585.7" font-size="28.5" fill="#505050" text-anchor="middle" >7</text>
<text x="39" y="630.7" font-size="28.5" fill="#505050" text-anchor="middle" >8</text>
<text x="39" y="675.7" font-size="28.5" fill="#505050" text-anchor="middle" >9</text>
<text x="39" y="720.7" font-size="28.5" fill="#505050" text-anchor="middle" >10</text>
<text x="39" y="765.7" font-size="28.5" fill="#505050" text-anchor="middle" >11</text>
<line x1="83" y1="328.5" x2="1894" y2="328.5" stroke="#d4d4d4" stroke-width="1" />
<line x1="83" y1="373.5" x2="1894" y2="373.5" stroke="#d4d4d4" stroke-width="1" />
<line x1="83" y1="418.5" x2="1894" y2="418.5" stroke="#d4d4d4" stroke-width="1" />
<line x1="83" y1="463.5" x2="1894" y2="463.5" stroke="#d4d4d4" stroke-width="1" />
<line x1="83" y1="508.5" x2="1894" y2="508.5" stroke="#d4d4d4" stroke-width="1" />
<line x1="83" y1="553.5" x2="1894" y2="553.5" stroke="#d4d4d4" stroke-width="1" />
<line x1="83" y1="598.5" x2="1894" y2="598.5" stroke="#d4d4d4" stroke-width="1" />
<line x1="83" y1="643.5" x2="1894" y2="643.5" stroke="#d4d4d4" stroke-width="1" />
<line x1="83" y1="688.5" x2="1894" y2="688.5" stroke="#d4d4d4" stroke-width="1" />
<line x1="83" y1="733.5" x2="1894" y2="733.5" stroke="#d4d4d4" stroke-width="1" />
<line x1="83" y1="778.5" x2="1894" y2="778.5" stroke="#d4d4d4" stroke-width="1" />
<line x1="226.5" y1="284" x2="226.5" y2="784" stroke="#d4d4d4" stroke-width="1" />
<line x1="370.5" y1="284" x2="370.5" y2="784" stroke="#d4d4d4" stroke-width="1" />
<line x1="514.5" y1="284" x2="514.5" y2="784" stroke="#d4d4d4" stroke-width="1" />
<line x1="658.5" y1="284" x2="658.5" y2="784" stroke="#d4d4d4" stroke-width="1" />
<line x1="802.5" y1="284" x2="802.5" y2="784" stroke="#d4d4d4" stroke-width="1" />
<line x1="998.5" y1="284" x2="998.5" y2="784" stroke="#d4d4d4" stroke-width="1" />
<line x1="1176.5" y1="284" x2="1176.5" y2="784" stroke="#d4d4d4" stroke-width="1" />
<line x1="1276.0" y1="284" x2="1276.0" y2="784" stroke="#d4d4d4" stroke-width="1" />
<line x1="1376.5" y1="284" x2="1376.5" y2="784" stroke="#d4d4d4" stroke-width="1" />
<line x1="1560.5" y1="284" x2="1560.5" y2="784" stroke="#d4d4d4" stroke-width="1" />
<line x1="1704.5" y1="284" x2="1704.5" y2="784" stroke="#d4d4d4" stroke-width="1" />
<line x1="1848.5" y1="284" x2="1848.5" y2="784" stroke="#d4d4d4" stroke-width="1" />
<rect x="226" y="284" width="432" height="44" fill="#c55a11" />
<rect x="226" y="328" width="432" height="405" fill="#fce4d6" />
<text x="231" y="319" font-size="31" fill="#ffffff" font-weight="bold" textLength="71" lengthAdjust="spacingAndGlyphs" >Store</text>
<text x="375.5" y="319" font-size="31" fill="#ffffff" font-weight="bold" textLength="104" lengthAdjust="spacingAndGlyphs" >Product</text>
<text x="519" y="319" font-size="31" fill="#ffffff" font-weight="bold" textLength="69" lengthAdjust="spacingAndGlyphs" >Sales</text>
<text x="232" y="363" font-size="31" fill="#000000" textLength="19.5" lengthAdjust="spacingAndGlyphs" >A</text>
<text x="376" y="363" font-size="31" fill="#000000" >pencil</text>
<text x="652" y="363" font-size="31" fill="#000000" text-anchor="end" textLength="32" lengthAdjust="spacingAndGlyphs" >23</text>
<text x="232" y="408" font-size="31" fill="#000000" textLength="19.5" lengthAdjust="spacingAndGlyphs" >A</text>
<text x="376" y="408" font-size="31" fill="#000000" >paper</text>
<text x="652" y="408" font-size="31" fill="#000000" text-anchor="end" textLength="32" lengthAdjust="spacingAndGlyphs" >21</text>
<text x="232" y="453" font-size="31" fill="#000000" textLength="19.5" lengthAdjust="spacingAndGlyphs" >A</text>
<text x="376" y="453" font-size="31" fill="#000000" >ballpen</text>
<text x="652" y="453" font-size="31" fill="#000000" text-anchor="end" textLength="32" lengthAdjust="spacingAndGlyphs" >22</text>
<text x="232" y="498" font-size="31" fill="#000000" textLength="17.8" lengthAdjust="spacingAndGlyphs" >B</text>
<text x="376" y="498" font-size="31" fill="#000000" >pencil</text>
<text x="652" y="498" font-size="31" fill="#000000" text-anchor="end" textLength="32" lengthAdjust="spacingAndGlyphs" >20</text>
<text x="232" y="543" font-size="31" fill="#000000" textLength="17.8" lengthAdjust="spacingAndGlyphs" >B</text>
<text x="376" y="543" font-size="31" fill="#000000" >paper</text>
<text x="652" y="543" font-size="31" fill="#000000" text-anchor="end" textLength="32" lengthAdjust="spacingAndGlyphs" >25</text>
<text x="232" y="588" font-size="31" fill="#000000" textLength="17.8" lengthAdjust="spacingAndGlyphs" >B</text>
<text x="376" y="588" font-size="31" fill="#000000" >ballpen</text>
<text x="652" y="588" font-size="31" fill="#000000" text-anchor="end" textLength="32" lengthAdjust="spacingAndGlyphs" >22</text>
<text x="232" y="633" font-size="31" fill="#000000" textLength="17.5" lengthAdjust="spacingAndGlyphs" >C</text>
<text x="376" y="633" font-size="31" fill="#000000" >pencil</text>
<text x="652" y="633" font-size="31" fill="#000000" text-anchor="end" textLength="32" lengthAdjust="spacingAndGlyphs" >24</text>
<text x="232" y="678" font-size="31" fill="#000000" textLength="17.5" lengthAdjust="spacingAndGlyphs" >C</text>
<text x="376" y="678" font-size="31" fill="#000000" >paper</text>
<text x="652" y="678" font-size="31" fill="#000000" text-anchor="end" textLength="32" lengthAdjust="spacingAndGlyphs" >22</text>
<text x="232" y="723" font-size="31" fill="#000000" textLength="17.5" lengthAdjust="spacingAndGlyphs" >C</text>
<text x="376" y="723" font-size="31" fill="#000000" >ballpen</text>
<text x="652" y="723" font-size="31" fill="#000000" text-anchor="end" textLength="32" lengthAdjust="spacingAndGlyphs" >26</text>
<rect x="225" y="284" width="2" height="450" fill="#000000" />
<rect x="369" y="284" width="2" height="450" fill="#000000" />
<rect x="513" y="284" width="2" height="450" fill="#000000" />
<rect x="657" y="284" width="2" height="450" fill="#000000" />
<rect x="225" y="327" width="434" height="2" fill="#000000" />
<rect x="225" y="372" width="434" height="2" fill="#000000" />
<rect x="225" y="417" width="434" height="2" fill="#000000" />
<rect x="225" y="462" width="434" height="2" fill="#000000" />
<rect x="225" y="507" width="434" height="2" fill="#000000" />
<rect x="225" y="552" width="434" height="2" fill="#000000" />
<rect x="225" y="597" width="434" height="2" fill="#000000" />
<rect x="225" y="642" width="434" height="2" fill="#000000" />
<rect x="225" y="687" width="434" height="2" fill="#000000" />
<rect x="225" y="732" width="434" height="2" fill="#000000" />
<rect x="802" y="284" width="759" height="89.8" fill="#4472c4" />
<text x="807.5" y="319" font-size="31" fill="#ffffff" font-weight="bold" textLength="169" lengthAdjust="spacingAndGlyphs" >Sum of Sales</text>
<text x="1004" y="319" font-size="31" fill="#ffffff" font-weight="bold" textLength="104.5" lengthAdjust="spacingAndGlyphs" >Product</text>
<text x="807.5" y="364" font-size="31" fill="#ffffff" font-weight="bold" textLength="70.5" lengthAdjust="spacingAndGlyphs" >Store</text>
<text x="1004" y="364" font-size="31" fill="#ffffff" font-weight="bold" textLength="98" lengthAdjust="spacingAndGlyphs" >ballpen</text>
<text x="1181.5" y="364" font-size="31" fill="#ffffff" font-weight="bold" textLength="78" lengthAdjust="spacingAndGlyphs" >paper</text>
<text x="1280.5" y="364" font-size="31" fill="#ffffff" font-weight="bold" textLength="79" lengthAdjust="spacingAndGlyphs" >pencil</text>
<text x="1381" y="364" font-size="31" fill="#ffffff" font-weight="bold" textLength="153.5" lengthAdjust="spacingAndGlyphs" >Grand Total</text>
<rect x="1149.0" y="301.0" width="23" height="23" fill="#ffffff" rx="1.5" stroke="#c8c8c8" stroke-width="1"/>
<path d="M1156.0 311.0 L1160.5 315.5 L1165.0 311.0" stroke="#252423" fill="none" stroke-width="1.3" />
<rect x="971.0" y="346.0" width="23" height="23" fill="#ffffff" rx="1.5" stroke="#c8c8c8" stroke-width="1"/>
<path d="M978.0 356.0 L982.5 360.5 L987.0 356.0" stroke="#252423" fill="none" stroke-width="1.3" />
<text x="808.5" y="407.5" font-size="31" fill="#000000" textLength="17.5" lengthAdjust="spacingAndGlyphs" >C</text>
<text x="1169" y="407.5" font-size="31" fill="#000000" text-anchor="end" textLength="32" lengthAdjust="spacingAndGlyphs" >26</text>
<text x="1267.5" y="407.5" font-size="31" fill="#000000" text-anchor="end" textLength="32" lengthAdjust="spacingAndGlyphs" >22</text>
<text x="1369.5" y="407.5" font-size="31" fill="#000000" text-anchor="end" textLength="32" lengthAdjust="spacingAndGlyphs" >24</text>
<text x="1554" y="407.5" font-size="31" fill="#000000" text-anchor="end" textLength="32" lengthAdjust="spacingAndGlyphs" >72</text>
<text x="808.5" y="452.5" font-size="31" fill="#000000" textLength="17.8" lengthAdjust="spacingAndGlyphs" >B</text>
<text x="1169" y="452.5" font-size="31" fill="#000000" text-anchor="end" textLength="32" lengthAdjust="spacingAndGlyphs" >22</text>
<text x="1267.5" y="452.5" font-size="31" fill="#000000" text-anchor="end" textLength="32" lengthAdjust="spacingAndGlyphs" >25</text>
<text x="1369.5" y="452.5" font-size="31" fill="#000000" text-anchor="end" textLength="32" lengthAdjust="spacingAndGlyphs" >20</text>
<text x="1554" y="452.5" font-size="31" fill="#000000" text-anchor="end" textLength="32" lengthAdjust="spacingAndGlyphs" >67</text>
<text x="808.5" y="497.5" font-size="31" fill="#000000" textLength="19.5" lengthAdjust="spacingAndGlyphs" >A</text>
<text x="1169" y="497.5" font-size="31" fill="#000000" text-anchor="end" textLength="32" lengthAdjust="spacingAndGlyphs" >22</text>
<text x="1267.5" y="497.5" font-size="31" fill="#000000" text-anchor="end" textLength="32" lengthAdjust="spacingAndGlyphs" >21</text>
<text x="1369.5" y="497.5" font-size="31" fill="#000000" text-anchor="end" textLength="32" lengthAdjust="spacingAndGlyphs" >23</text>
<text x="1554" y="497.5" font-size="31" fill="#000000" text-anchor="end" textLength="32" lengthAdjust="spacingAndGlyphs" >66</text>
<text x="808" y="543" font-size="31" fill="#000000" font-weight="bold" textLength="152" lengthAdjust="spacingAndGlyphs" >Grand Total</text>
<text x="1169" y="543" font-size="31" fill="#000000" font-weight="bold" text-anchor="end" textLength="32.8" lengthAdjust="spacingAndGlyphs" >70</text>
<text x="1267.5" y="543" font-size="31" fill="#000000" font-weight="bold" text-anchor="end" textLength="32.8" lengthAdjust="spacingAndGlyphs" >68</text>
<text x="1369.5" y="543" font-size="31" fill="#000000" font-weight="bold" text-anchor="end" textLength="32.8" lengthAdjust="spacingAndGlyphs" >67</text>
<text x="1554" y="543" font-size="31" fill="#000000" font-weight="bold" text-anchor="end" textLength="49.199999999999996" lengthAdjust="spacingAndGlyphs" >205</text>
<rect x="801" y="507" width="760" height="2" fill="#2f5597" />
<rect x="801" y="551" width="760" height="3.5" fill="#2f5597" />
<rect x="1374.6" y="371.5" width="186.6" height="47.6" fill="none" stroke="#217346" stroke-width="4.2"/>
<rect x="1555.5" y="413.5" width="10.5" height="9" fill="#217346" stroke="#ffffff" stroke-width="1"/>
<rect x="1895" y="283" width="25" height="501" fill="#e6e6e6" />
<rect x="1895.5" y="284.5" width="23" height="23" fill="#ffffff" stroke="#b9bdc1" stroke-width="1"/>
<path d="M1901 300.5 L1906.8 290.5 L1912.5 300.5 Z" stroke="none" fill="#767676" stroke-width="1" />
<rect x="1895.5" y="307.5" width="23" height="179" fill="#ffffff" stroke="#b9bdc1" stroke-width="1.2"/>
<rect x="1895.5" y="760.5" width="23" height="23" fill="#ffffff" stroke="#b9bdc1" stroke-width="1"/>
<path d="M1901.2 767.3 L1912.4 767.3 L1906.8 777.1 Z" stroke="none" fill="#767676" stroke-width="1" />
<rect x="0" y="784" width="1920" height="24" fill="#f4f4f4" />
<rect x="83" y="784" width="1812" height="24" fill="#e6e6e6" />
<rect x="83.5" y="784.5" width="755" height="23" fill="#ffffff" stroke="#b9bdc1" stroke-width="1"/>
<rect x="83.5" y="784.5" width="23" height="23" fill="#ffffff" stroke="#b9bdc1" stroke-width="1"/>
<path d="M89.8 796 L99.6 790.1 L99.6 801.5 Z" stroke="none" fill="#767676" stroke-width="1" />
<rect x="1871.5" y="784.5" width="23" height="23" fill="#ffffff" stroke="#b9bdc1" stroke-width="1"/>
<path d="M1878.5 790.3 L1888.4 796 L1878.5 801.7 Z" stroke="none" fill="#767676" stroke-width="1" />
<rect x="0" y="779" width="81" height="5" fill="#f4f4f4" />
<rect x="81" y="778" width="2" height="4.5" fill="#b4b4b4" />
<rect x="0" y="808" width="1920" height="52" fill="#f4f4f4" />
<path d="M29 829 L19 835.5 L29 842" stroke="#c8c6c4" fill="none" stroke-width="1.4" />
<path d="M67.5 829 L77.5 835.5 L67.5 842" stroke="#c8c6c4" fill="none" stroke-width="1.4" />
<path d="M110.5 828.5 H130 M110.5 835.5 H130 M110.5 842.5 H130" stroke="#484644" fill="none" stroke-width="1.6" />
<text x="160" y="842" font-size="21" fill="#323130" textLength="64" lengthAdjust="spacingAndGlyphs" stroke="#323130" stroke-width="0.6">Sheet1</text>
<rect x="158" y="855.5" width="66.5" height="4" fill="#107c41" />
<path d="M252.5 835.5 H270.5 M261.5 826.5 V844.5" stroke="#484644" fill="none" stroke-width="1.6" />
<rect x="0" y="860" width="1920" height="35" fill="#ffffff" />
<rect x="0" y="860" width="1920" height="1.2" fill="#dcdcdc" />
<rect x="0" y="893" width="1920" height="2" fill="#a8a8a8" />
<text x="21.5" y="885.8" font-size="19" fill="#484644" textLength="229" lengthAdjust="spacingAndGlyphs" >Calculation Mode: Automatic</text>
<text x="279" y="885.8" font-size="19" fill="#484644" textLength="155" lengthAdjust="spacingAndGlyphs" >Workbook Statistics</text>
<path d="M1441 878 L1444.5 882 L1448 878" stroke="#484644" fill="none" stroke-width="1.5" />
<text x="1513.5" y="885.8" font-size="19" fill="#484644" textLength="217" lengthAdjust="spacingAndGlyphs" >Give Feedback to Microsoft</text>
<path d="M1794 879.5 H1810" stroke="#484644" fill="none" stroke-width="1.6" />
<text x="1824.5" y="885.8" font-size="19" fill="#484644" textLength="42.5" lengthAdjust="spacingAndGlyphs" >150%</text>
<path d="M1878 879 H1895 M1886.5 870.5 V887.5" stroke="#484644" fill="none" stroke-width="1.6" />
</svg>
</body></html>
